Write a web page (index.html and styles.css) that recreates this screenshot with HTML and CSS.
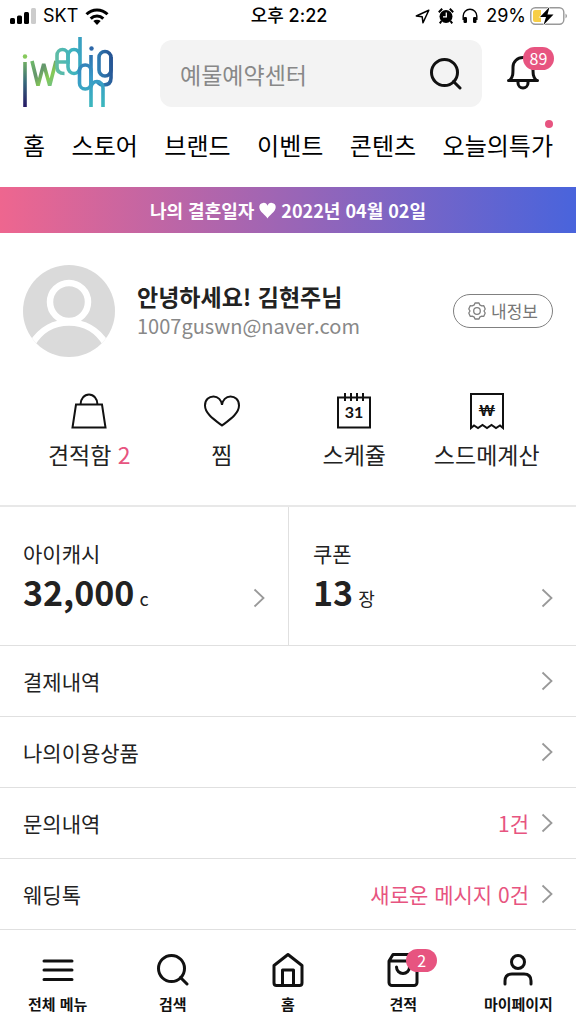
FILE: index.html
```html
<!DOCTYPE html>
<html lang="ko">
<head>
<meta charset="utf-8">
<meta name="viewport" content="width=device-width, initial-scale=1">
<title>마이페이지</title>
<link rel="stylesheet" href="styles.css">
</head>
<body>
<svg class="defs" aria-hidden="true">
  <symbol id="chevron" viewBox="0 0 12 20"><path d="M1.500 1.500 10.500 10 1.500 18.500" fill="none" stroke="#999" stroke-width="1.800"/></symbol>
  <symbol id="search" viewBox="0 0 32 32"><circle cx="14.500" cy="14.500" r="13"/><path d="M23.500 23.500 30 30"/></symbol>
</svg>
<div class="app">
  <div class="status">
    <div class="status-side">
      <svg width="26" height="16" viewBox="0 0 26 16"><rect x="0" y="10" width="5" height="6" rx="1.500"/><rect x="7" y="7.500" width="5" height="8.500" rx="1.500"/><rect x="14" y="4" width="5" height="12" rx="1.500"/><rect x="21" y="0" width="5" height="16" rx="1.500" fill="#ccc"/></svg>
      <span class="carrier">SKT</span>
      <svg width="24" height="17" viewBox="0 0 24 17"><g fill="none" stroke="#000" stroke-width="3"><path d="M1.500 6.200a15 15 0 0 1 21 0"/><path d="M5.700 10.600a9 9 0 0 1 12.600 0"/></g><path d="M8.300 13.100a5.400 5.400 0 0 1 7.400 0L12 17z"/></svg>
    </div>
    <div class="status-time">오후 2:22</div>
    <div class="status-side status-right">
      <svg width="15" height="15" viewBox="0 0 15 15"><path d="M13.800 1.200 1.300 7l5.900.8.800 6z" fill="none" stroke="#000" stroke-width="1.500" stroke-linejoin="round"/></svg>
      <svg width="16" height="16" viewBox="0 0 16 16"><circle cx="8" cy="8.500" r="6.500"/><path d="M.8 4.200 4.200.8M11.800.8l3.400 3.400M3.500 13 1.800 15.400M12.500 13l1.700 2.400" stroke="#000" stroke-width="2"/><path d="M8.300 4.500v4.300H5" fill="none" stroke="#fff" stroke-width="1.300"/></svg>
      <svg width="16" height="16" viewBox="0 0 16 16"><path d="M1.200 12V8a6.800 6.800 0 0 1 13.600 0v4" fill="none" stroke="#000" stroke-width="1.400"/><rect x="1.500" y="9" width="3.500" height="6" rx="1.200"/><rect x="11" y="9" width="3.500" height="6" rx="1.200"/></svg>
      <span class="percent">29%</span>
      <svg width="38" height="20" viewBox="0 0 38 20"><rect x=".8" y="1.800" width="33" height="16.400" rx="4.500" fill="#fff" stroke="#999" stroke-width="1.400"/><path d="M35.500 7.500q3 2.500 0 5z" fill="#999"/><path d="M5 4h6v12H5a2 2 0 0 1-2-2V6a2 2 0 0 1 2-2" fill="#f7ce46"/><path d="M19.500 1 10 11h6l-2.500 8L23.500 8.500h-6z" stroke="#fff" stroke-width="1.200" paint-order="stroke"/></svg>
    </div>
  </div>

  <header class="header">
    <a class="logo" href="#" aria-label="iweddign">
      <svg width="92" height="71" viewBox="22 36 92 71" fill="none">
        <defs>
          <linearGradient id="lg1" gradientUnits="userSpaceOnUse" x1="0" y1="54" x2="0" y2="106"><stop stop-color="#86c95b"/><stop offset=".55" stop-color="#36677b"/><stop offset="1" stop-color="#251a65"/></linearGradient>
          <linearGradient id="lg2" gradientUnits="userSpaceOnUse" x1="31" y1="60" x2="56" y2="84"><stop stop-color="#6ebd68"/><stop offset=".4" stop-color="#64956d"/><stop offset=".7" stop-color="#85c953"/><stop offset="1" stop-color="#6fc08a"/></linearGradient>
          <linearGradient id="lg3" gradientUnits="userSpaceOnUse" x1="55" y1="70" x2="112" y2="62"><stop stop-color="#67bea0"/><stop offset=".35" stop-color="#3bb3c1"/><stop offset=".65" stop-color="#358fc0"/><stop offset="1" stop-color="#255494"/></linearGradient>
          <linearGradient id="lg4" gradientUnits="userSpaceOnUse" x1="0" y1="48" x2="0" y2="107"><stop stop-color="#2d67a8"/><stop offset=".5" stop-color="#3799c7"/><stop offset="1" stop-color="#3cb8bd"/></linearGradient>
        </defs>
        <circle cx="25" cy="56.500" r="2.200" fill="#86c95b"/>
        <path d="M25 62V107" stroke="url(#lg1)" stroke-width="3.600"/>
        <path d="M32 61 38 85.500 43.700 64 49.700 85.500 56 61" stroke="url(#lg2)" stroke-width="3.600" stroke-linejoin="bevel"/>
        <g stroke="url(#lg3)" stroke-width="3.600">
          <path d="M57 62h11V55.500a5.500 6 0 0 0-11 0V67q0 6.500 7.500 6.500"/>
          <path d="M80 37V67a6 6.500 0 0 1-12 0V56a6 6.500 0 0 1 12 0"/>
          <path d="M111 57V78q0 7-7.500 7-3.500 0-6-3"/>
          <rect x="99" y="51.500" width="12" height="24.500" rx="6"/>
        </g>
        <g stroke="url(#lg4)" stroke-width="3.600">
          <rect x="79.500" y="65" width="11.500" height="24" rx="5.700"/>
          <path d="M91 55V107M91 88a6 6.500 0 0 1 12 0V107"/>
        </g>
        <circle cx="91.500" cy="48.500" r="2.200" fill="#2d67a8"/>
      </svg>
    </a>
    <form class="search" role="search">
      <input type="search" aria-label="검색어" placeholder="예물예약센터">
      <button type="button" aria-label="검색"><svg class="line" width="32" height="32"><use href="#search"/></svg></button>
    </form>
    <button class="bell" type="button" aria-label="알림 89개">
      <svg class="line" width="32" height="36" viewBox="0 0 32 36"><path d="M1.500 25.500H30.500M3 25c3-3 3-6 3-13a10 9.500 0 0 1 20 0c0 7 0 10 3 13M11 26.500v1.500a5 5 0 0 0 10 0v-1.500"/></svg>
      <span class="badge">89</span>
    </button>
  </header>

  <nav class="tabs" aria-label="주요 메뉴">
    <a href="#">홈</a><a href="#">스토어</a><a href="#">브랜드</a><a href="#">이벤트</a><a href="#">콘텐츠</a><a class="hot" href="#">오늘의특가</a>
  </nav>

  <div class="banner">나의 결혼일자
    <svg width="17" height="17" viewBox="0 0 17 17" role="img" aria-label="하트"><path d="M8.500 16.500C7 13 .3 10 .3 5A4.200 4.200 0 0 1 8.500 3.800 4.200 4.200 0 0 1 16.700 5c0 5-6.700 8-8.200 11.500z" fill="#fff"/></svg>
    2022년 04월 02일</div>

  <main>
    <section class="profile">
      <svg class="avatar" width="92" height="92" viewBox="0 0 92 92"><defs><clipPath id="round"><circle cx="46" cy="46" r="46"/></clipPath></defs><g clip-path="url(#round)"><rect width="92" height="92" fill="#dadada"/><g fill="none" stroke="#fff" stroke-width="6.500"><circle cx="46" cy="37" r="19"/><path d="M9 79C18 64 32 57.500 46 57.500S74 64 83 79"/></g></g></svg>
      <div class="who">
        <h1>안녕하세요! 김현주님</h1>
        <p>1007guswn@naver.com</p>
      </div>
      <button class="info" type="button">
        <svg width="18" height="18" viewBox="0 0 18 18" fill="none" stroke="#808080" stroke-width="1.300"><circle cx="9" cy="9" r="3.300"/><path d="M7 1h4l.7 1.800 2.100 1.100 2-.2L17.200 7 16 9l1.200 2-1.400 3.300-2-.2-2.100 1.100L11 17H7l-.7-1.800-2.100-1.100-2 .2L.8 11 2 9 .8 7l1.400-3.300 2 .2 2.100-1.100z" stroke-linejoin="round"/></svg>
        내정보</button>
    </section>

    <nav class="quick" aria-label="바로가기">
      <a href="#"><svg width="36" height="38" viewBox="0 0 36 38"><path d="M5 12.500H31L34.500 35.500H1.500zM9.500 12.500a8.500 10 0 0 1 17 0"/></svg><span>견적함 <b>2</b></span></a>
      <a href="#"><svg width="36" height="38" viewBox="0 0 36 38"><path d="M18 33.500C10 27.500 1 21.500 1 13.500 1 7.500 5 4.500 9.500 4.500S17.500 8 18 13c.5-5 4-8.500 8.500-8.500S35 7.500 35 13.500c0 8-9 14-17 20z"/></svg><span>찜</span></a>
      <a href="#"><svg width="36" height="38" viewBox="0 0 36 38"><path d="M2 5.500H34V35.500H2zM9 1V9M15 1V9M21 1V9M27 1V9"/><text x="18" y="26" text-anchor="middle">31</text></svg><span>스케쥴</span></a>
      <a href="#"><svg width="36" height="38" viewBox="0 0 36 38"><path d="M2 36V2H34V36l-3-2.500-4 2.500-4.500-3-4.500 3-4.500-3L9 36 5 33.500z"/><text x="18" y="24" text-anchor="middle">₩</text></svg><span>스드메계산</span></a>
    </nav>

    <section class="wallet">
      <a href="#"><span>아이캐시<span class="amount"><strong>32,000</strong> c</span></span><svg class="chev"><use href="#chevron"/></svg></a>
      <a href="#"><span>쿠폰<span class="amount"><strong>13</strong> 장</span></span><svg class="chev"><use href="#chevron"/></svg></a>
    </section>

    <ul class="menu">
      <li><a href="#">결제내역<svg class="chev"><use href="#chevron"/></svg></a></li>
      <li><a href="#">나의이용상품<svg class="chev"><use href="#chevron"/></svg></a></li>
      <li><a href="#">문의내역<em>1건</em><svg class="chev"><use href="#chevron"/></svg></a></li>
      <li><a href="#">웨딩톡<em>새로운 메시지 0건</em><svg class="chev"><use href="#chevron"/></svg></a></li>
    </ul>
  </main>

  <nav class="bottom" aria-label="하단 메뉴">
    <a href="#"><svg class="line" width="36" height="36" viewBox="0 0 36 36"><path d="M4 9H32M4 18H32M4 27.500H32"/></svg>전체 메뉴</a>
    <a href="#"><svg class="line" width="36" height="36" viewBox="-2 -2 36 36"><use href="#search" width="32" height="32"/></svg>검색</a>
    <a href="#"><svg class="line" width="36" height="36" viewBox="0 0 36 36"><path d="M4 13.500 18 2.500 32 13.500V31q0 2.500-2.500 2.500h-23Q4 33.500 4 31zM12.500 33V18H23.500V33"/></svg>홈</a>
    <a href="#"><span class="cart"><svg class="line" width="36" height="36" viewBox="0 0 36 36"><path d="M4 9 8 2.500H28L32 9V30.500a3 3 0 0 1-3 3H7a3 3 0 0 1-3-3V9H32M11.500 15a6.500 6.500 0 0 0 13 0"/></svg><span class="badge">2</span></span>견적</a>
    <a href="#"><svg class="line" width="36" height="36" viewBox="0 0 36 36"><circle cx="18" cy="10" r="6.500"/><path d="M5 32V29q0-7 7-7H24q7 0 7 7v3"/></svg>마이페이지</a>
  </nav>
</div>
</body>
</html>
```
FILE: styles.css
```css
* { box-sizing: border-box; }
body {
  margin: 0;
  background: #fff;
  color: #222;
  font-family: "Noto Sans CJK KR", "Noto Sans", sans-serif;
  font-size: 21px;
  line-height: 30px;
}
a { color: inherit; text-decoration: none; }
button { padding: 0; border: 0; background: none; font: inherit; color: inherit; }
svg { display: block; flex: none; }
.defs { position: absolute; width: 0; height: 0; }
.app { display: flex; flex-direction: column; min-height: 100vh; }
.line { fill: none; stroke: #111; stroke-width: 3; stroke-linecap: round; stroke-linejoin: round; }

.status {
  display: grid;
  grid-template-columns: 1fr auto 1fr;
  align-items: center;
  height: 32px;
  padding: 0 8px 0 10px;
  color: #000;
  font-family: Inter, "Noto Sans CJK KR", sans-serif;
  font-size: 18px;
}
.status-side { display: flex; align-items: center; gap: 7px; }
.status-right { justify-content: flex-end; gap: 8px; }
.status-time { font-weight: 500; }
.percent { margin-right: -4px; }

.header {
  display: flex;
  align-items: flex-end;
  padding: 4px 23px 0 22px;
}
.search {
  display: flex;
  flex: 1;
  align-items: center;
  min-width: 0;
  height: 67px;
  margin: 0 25px 0 46px;
  padding: 0 20px;
  border-radius: 12px;
  background: #f3f3f3;
}
.search input {
  flex: 1;
  min-width: 0;
  padding: 0;
  border: 0;
  outline: 0;
  background: none;
  font: inherit;
  font-size: 23px;
}
.search input::placeholder { color: #888; }
.bell { position: relative; margin: 0 14px 16px 0; }
.badge {
  position: absolute;
  top: -8px;
  left: 16px;
  width: 31px;
  border-radius: 12px;
  background: #e75480;
  color: #fff;
  font-size: 16px;
  font-weight: 400;
  line-height: 23px;
  text-align: center;
}

.tabs {
  display: flex;
  justify-content: space-between;
  padding: 19px 23px 23px;
  color: #000;
  font-size: 24px;
  line-height: 38px;
}
.hot { position: relative; }
.hot::after {
  content: "";
  position: absolute;
  top: -6px;
  right: 0;
  width: 8px;
  height: 8px;
  border-radius: 50%;
  background: #e75480;
}

.banner {
  display: flex;
  align-items: center;
  justify-content: center;
  gap: 5px;
  height: 46px;
  background: linear-gradient(90deg, #ee668f, #4964dc);
  color: #fff;
  font-size: 18px;
  font-weight: 700;
}

.profile { display: flex; align-items: center; gap: 22px; padding: 32px 23px 0; }
.who { flex: 1; }
.who h1 { margin: 0; font-size: 23px; line-height: 30px; }
.who p { margin: 0; color: #888; font-size: 20px; line-height: 30px; }
.info {
  display: flex;
  align-items: center;
  justify-content: center;
  gap: 5px;
  width: 100px;
  height: 34px;
  border: 1px solid #808080;
  border-radius: 17px;
  color: #777;
  font-size: 17px;
}

.quick {
  display: grid;
  grid-template-columns: repeat(4, 1fr);
  padding: 35px 23px 34px;
  font-size: 23px;
  line-height: 34px;
}
.quick a { display: flex; flex-direction: column; align-items: center; gap: 7px; white-space: nowrap; }
.quick svg { fill: none; stroke: #111; stroke-width: 2; }
.quick text { fill: #111; stroke: none; font-family: Lato, sans-serif; font-size: 16px; font-weight: 700; }
.quick b { color: #e75480; font-weight: 400; }

.wallet { display: grid; grid-template-columns: 1fr 1fr; border-top: 2px solid #e8e8e8; }
.wallet a {
  display: flex;
  align-items: flex-end;
  justify-content: space-between;
  padding: 31px 23px 29px;
}
.wallet a + a { padding-left: 24px; border-left: 1px solid #e0e0e0; }
.wallet .chev { margin-bottom: 8px; }
.amount { display: flex; align-items: baseline; gap: 5px; font-size: 18px; }
.amount strong { font-size: 34px; line-height: 48px; }
.chev { width: 12px; height: 20px; }

.menu { margin: 0; padding: 0; border-bottom: 1px solid #e0e0e0; list-style: none; }
.menu a {
  display: flex;
  align-items: center;
  gap: 12px;
  padding: 20px 23px;
  border-top: 1px solid #e0e0e0;
}
.menu .chev { margin-left: auto; }
.menu em { margin-left: auto; color: #e75480; font-style: normal; }
.menu em + .chev { margin-left: 0; }

.bottom {
  display: grid;
  grid-template-columns: repeat(5, 1fr);
  margin-top: auto;
  padding: 22px 0 8px;
  color: #111;
  font-size: 15px;
  font-weight: 700;
  line-height: 24px;
}
.bottom a { display: flex; flex-direction: column; align-items: center; gap: 4px; }
.cart { position: relative; }
.cart .badge { top: -3px; left: 21px; }
```
